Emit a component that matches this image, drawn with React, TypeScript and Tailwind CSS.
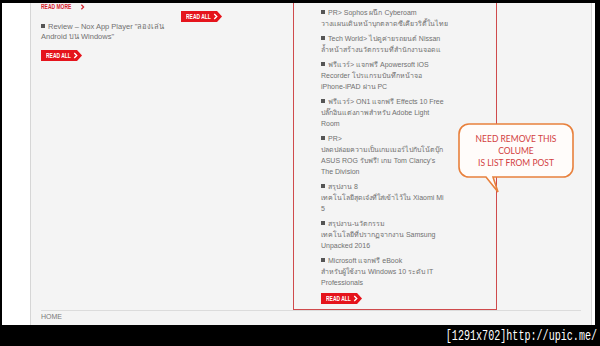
const SANS = "font-['Liberation_Sans','DejaVu_Sans',sans-serif]"

const ITEMS: string[][] = [
  ['PR> Sophos ผนึก Cyberoam', 'วางแผนเดินหน้าบุกตลาดซีเคียวริตี้ในไทย'],
  ['Tech World> ไปดูค่ายรถยนต์ Nissan', 'ล้ำหน้าสร้างนวัตกรรมที่สำนักงานจอดแ'],
  ['ฟรีแวร์> แจกฟรี Apowersoft iOS', 'Recorder โปรแกรมบันทึกหน้าจอ', 'iPhone-iPAD ผ่าน PC'],
  ['ฟรีแวร์> ON1 แจกฟรี Effects 10 Free', 'ปลั๊กอินแต่งภาพสำหรับ Adobe Light', 'Room'],
  ['PR>', 'ปลดปล่อยความเป็นเกมเมอร์ไปกับโน้ตบุ๊ก', "ASUS ROG รับฟรี! เกม Tom Clancy's", 'The Division'],
  ['สรุปงาน 8', 'เทคโนโลยีสุดเจ๋งที่ใส่เข้าไว้ใน Xiaomi Mi', '5'],
  ['สรุปงาน-นวัตกรรม', 'เทคโนโลยีที่ปรากฏจากงาน Samsung', 'Unpacked 2016'],
  ['Microsoft แจกฟรี eBook', 'สำหรับผู้ใช้งาน Windows 10 ระดับ IT', 'Professionals'],
]

function Chevron({ className }: { className: string }) {
  return (
    <svg viewBox="0 0 6 8" className={className} fill="none" stroke="currentColor" strokeWidth="1.6">
      <path d="M1.5 1 L4.5 4 L1.5 7" />
    </svg>
  )
}

function ReadAll() {
  return (
    <div className="relative flex h-[11px] w-[41px] items-center bg-[#e5141c] [clip-path:polygon(0_0,calc(100%-5px)_0,100%_50%,calc(100%-5px)_100%,0_100%)]">
      <span className={`${SANS} ml-[5px] inline-block origin-left scale-x-[0.62] whitespace-nowrap text-[8px] font-bold leading-none text-white`}>
        READ ALL
      </span>
      <Chevron className="absolute right-[4px] top-[2px] h-[7px] w-[5px] text-white" />
    </div>
  )
}

function Bullet() {
  return <span className="mr-[3px] inline-block h-[4px] w-[4px] bg-[#555] align-[1px]" />
}

export default function App() {
  return (
    <div className="flex h-[346px] w-[600px] flex-col overflow-hidden bg-black">
      <div className="flex h-[325px] pl-[2px] pr-[5px] pt-[3px]">
        <div className="flex flex-1 bg-white">
          <div className="w-[28px]" />
          <div className="relative flex flex-1 flex-col border-x border-[#d6d6d6] bg-[#f4f4f4]">
            <div className="flex h-[307px] pl-[10px]">
              {/* left column */}
              <div className="w-[140px]">
                <div className="flex h-[8px] items-center text-[#d4202a]">
                  <span className={`${SANS} inline-block origin-left scale-x-[0.62] whitespace-nowrap text-[8px] font-bold leading-none`}>
                    READ MORE
                  </span>
                  <Chevron className="-ml-[10px] h-[6px] w-[5px]" />
                </div>
                <div className={`${SANS} mt-[11px] text-[7.5px] leading-[10px] text-[#707070]`}>
                  <div><Bullet />Review – Nox App Player "ลองเล่น</div>
                  <div>Android บน Windows"</div>
                </div>
                <div className="mt-[8px]">
                  <ReadAll />
                </div>
              </div>

              {/* middle column */}
              <div className="w-[112px] pt-[8px]">
                <ReadAll />
              </div>

              {/* boxed list column */}
              <div className="flex w-[204px] flex-col gap-[4px] border-x border-b border-[#cf4a4c] pl-[27px] pt-[4px]">
                {ITEMS.map((lines, i) => (
                  <div key={i} className={`${SANS} w-[130px] text-[7px] leading-[11px] text-[#707070]`}>
                    {lines.map((l, j) => (
                      <div key={j} className="whitespace-nowrap">
                        {j === 0 && <Bullet />}
                        {l}
                      </div>
                    ))}
                  </div>
                ))}
                <div className="mt-[1px]">
                  <ReadAll />
                </div>
              </div>
            </div>

            <div className="mx-[10px] flex-1 border-t border-[#dcdcdc]">
              <div className={`${SANS} pt-[1px] text-[7px] leading-[9px] text-[#7a7a7a]`}>HOME</div>
            </div>

            {/* callout */}
            <div className="absolute left-[424px] top-[117px] h-[75px] w-[124px]">
              <svg viewBox="0 0 124 75" className="absolute inset-0 h-full w-full">
                <path
                  d="M14 4 H108 A10 10 0 0 1 118 14 V47 A10 10 0 0 1 108 57 H38 L43 72 L31 57 H14 A10 10 0 0 1 4 47 V14 A10 10 0 0 1 14 4 Z"
                  fill="#fffcfa"
                  stroke="#e8803c"
                  strokeWidth="1.6"
                />
              </svg>
              <div className="relative flex h-[61px] flex-col items-center justify-center pr-[2px] text-center font-['Lato','Open_Sans',sans-serif] text-[8.5px] leading-[12px] text-[#d2403e]">
                <div>NEED REMOVE THIS</div>
                <div>COLUME</div>
                <div>IS LIST FROM POST</div>
              </div>
            </div>
          </div>
          <div className="w-[3px]" />
        </div>
      </div>
      <div className="flex h-[21px] items-center justify-end pr-[3px]">
        <span className="inline-block origin-right scale-x-[0.72] whitespace-nowrap font-['Liberation_Mono',monospace] text-[14px] leading-none text-white">
          [1291x702]http://upic.me/
        </span>
      </div>
    </div>
  )
}
